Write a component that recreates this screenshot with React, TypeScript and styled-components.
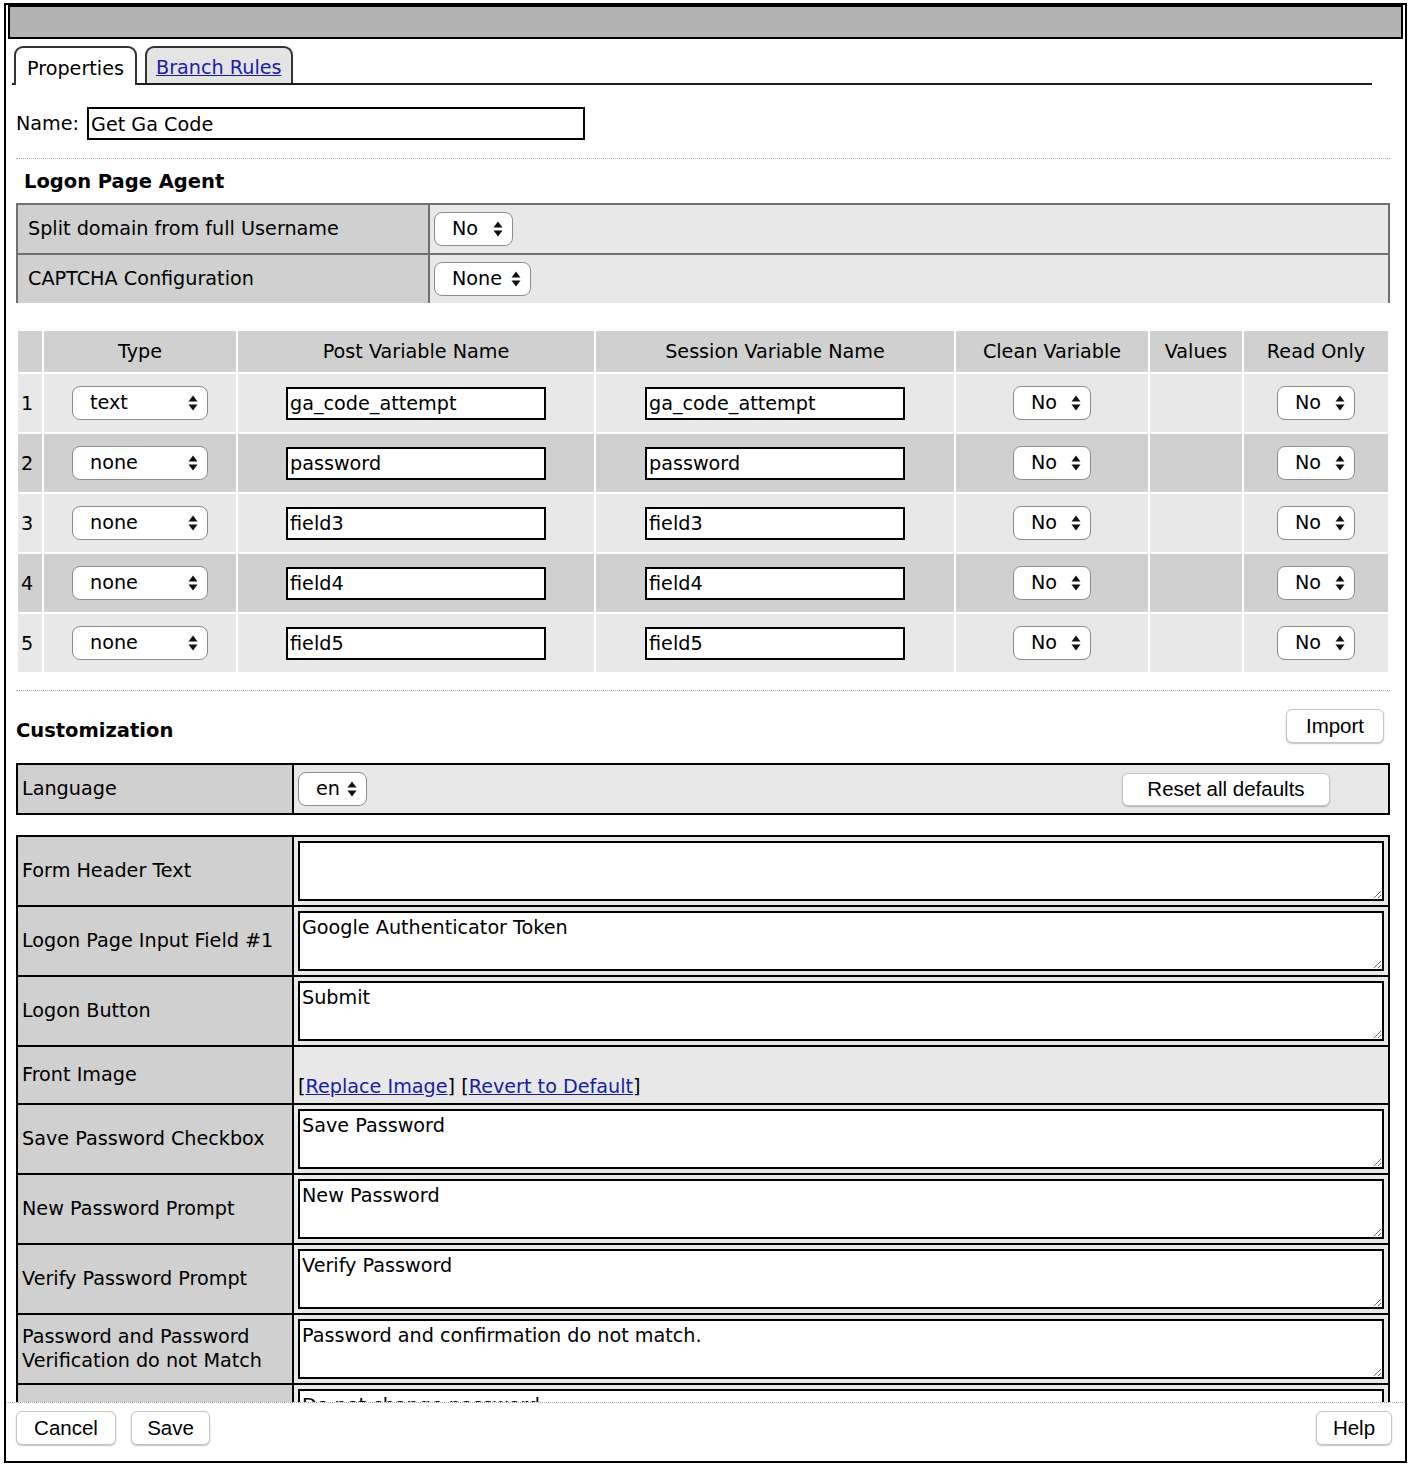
import React from 'react';
import styled, { createGlobalStyle } from 'styled-components';

const FONT = `"DejaVu Sans", Verdana, sans-serif`;
const BTN_FONT = `"Liberation Sans", Arial, Helvetica, sans-serif`;

const Global = createGlobalStyle`
  html, body { margin: 0; padding: 0; background: #fff; }
  body { font-family: ${FONT}; font-size: 19.2px; line-height: 24px; color: #000; }
  * { box-sizing: border-box; }
`;

const Frame = styled.div`
  margin: 3px 0 0 4px;
  width: 1403px;
  height: 1460px;
  border: 2px solid #000;
  display: flex;
  flex-direction: column;
  background: #fff;
`;

const TitleBar = styled.div`
  flex: none;
  height: 34px;
  margin: 0 2px;
  background: #b3b3b3;
  border: 2px solid #000;
`;

const Body = styled.div`
  flex: 1;
  min-height: 0;
  overflow: hidden;
  padding: 0 15px 0 10px;
`;

const TabBar = styled.div`
  display: flex;
  align-items: flex-end;
  gap: 8px;
  height: 39px;
  margin: 7px 18px 0 -4px;
  padding-left: 2px;
  border-bottom: 2px solid #1c1c1c;
`;

const Tab = styled.div<{ $active?: boolean }>`
  display: flex;
  align-items: center;
  height: ${(p) => (p.$active ? 39 : 37)}px;
  margin-bottom: ${(p) => (p.$active ? -2 : 0)}px;
  padding: 4px ${(p) => (p.$active ? 11 : 9)}px 0;
  border: 2px solid #333;
  border-bottom: none;
  border-radius: 9px 9px 0 0;
  background: ${(p) => (p.$active ? '#fff' : '#e4e4e4')};
`;

const Link = styled.a`
  color: #1b1ba6;
  text-decoration: underline;
  cursor: pointer;
`;

const NameRow = styled.div`
  display: flex;
  align-items: center;
  gap: 8px;
  margin-top: 22px;
`;

const TextInput = styled.input<{ $w: number }>`
  width: ${(p) => p.$w}px;
  height: 33px;
  border: 2px solid #000;
  padding: 1px 2px 0;
  font: inherit;
  color: #000;
  background: #fff;
  outline: none;
`;

const Separator = styled.div<{ $top: number }>`
  margin-top: ${(p) => p.$top}px;
  border-top: 1px dotted #a6a6a6;
`;

const SectionTitle = styled.div<{ $indent?: number }>`
  font-weight: bold;
  font-size: 19.5px;
  line-height: 24px;
  padding-left: ${(p) => p.$indent ?? 0}px;
`;

const AgentTitle = styled(SectionTitle)`
  margin-top: 11px;
`;

const AgentGrid = styled.div`
  display: grid;
  grid-template-columns: 410px 1fr;
  grid-auto-rows: 48px;
  gap: 2px;
  padding: 2px 2px 0 2px;
  margin-top: 9px;
  background: #707070;
`;

const LabelCell = styled.div<{ $pad?: number }>`
  display: flex;
  align-items: center;
  padding: 0 2px 0 ${(p) => p.$pad ?? 4}px;
  background: #d0d0d0;
`;

const ValueCell = styled.div<{ $align?: string }>`
  display: flex;
  align-items: ${(p) => p.$align ?? 'center'};
  padding: 4px;
  background: #e8e8e8;
`;

const VarGrid = styled.div`
  display: grid;
  grid-template-columns: 24px 192px 356px 358px 192px 92px 144px;
  grid-template-rows: 41px;
  grid-auto-rows: 58px;
  gap: 2px;
  padding: 2px;
  margin-top: 26px;
  background: #fff;
`;

const HeadCell = styled.div`
  display: flex;
  align-items: center;
  justify-content: center;
  background: #d0d0d0;
  white-space: nowrap;
`;

const VarCell = styled.div<{ $even: boolean; $left?: boolean }>`
  display: flex;
  align-items: center;
  justify-content: ${(p) => (p.$left ? 'flex-start' : 'center')};
  padding-left: ${(p) => (p.$left ? 3 : 0)}px;
  padding-top: ${(p) => (p.$left ? 2 : 0)}px;
  background: ${(p) => (p.$even ? '#d0d0d0' : '#e8e8e8')};
`;

const SelectBox = styled.div<{ $w: number }>`
  display: inline-flex;
  align-items: center;
  justify-content: space-between;
  width: ${(p) => p.$w}px;
  height: 34px;
  padding: 0 9px 0 17px;
  background: #fff;
  border: 1px solid #8c8c8c;
  border-radius: 8px;
  flex: none;
`;

const CustomHeader = styled.div`
  display: flex;
  align-items: flex-end;
  justify-content: space-between;
  margin-top: 18px;
  padding-right: 6px;
`;

const Button = styled.button<{ $w: number; $h?: number }>`
  width: ${(p) => p.$w}px;
  height: ${(p) => p.$h ?? 34}px;
  padding: 0;
  font-family: ${BTN_FONT};
  font-size: 20.5px;
  color: #000;
  background: #fff;
  border: 1px solid #c4c4c4;
  border-radius: 6px;
  box-shadow: 0 1px 1.5px rgba(0, 0, 0, 0.25);
  flex: none;
`;

const BlackGrid = styled.div<{ $top: number }>`
  display: grid;
  grid-template-columns: 274px 1fr;
  gap: 2px;
  padding: 2px;
  margin-top: ${(p) => p.$top}px;
  background: #000;
`;

const LangValue = styled.div`
  display: flex;
  align-items: center;
  justify-content: space-between;
  height: 48px;
  padding: 0 58px 0 4px;
  background: #e8e8e8;
`;

const TextArea = styled.textarea`
  display: block;
  width: 100%;
  height: 60px;
  margin: 0;
  border: 2px solid #000;
  padding: 3px 2px 1px;
  font: inherit;
  line-height: 24px;
  color: #000;
  background: #fff;
  outline: none;
  resize: both;
`;

const ImageLinks = styled.div`
  height: 48px;
  display: flex;
  align-items: flex-end;
`;

const Footer = styled.div`
  flex: none;
  display: flex;
  align-items: flex-start;
  gap: 15px;
  height: 59px;
  padding: 8px 13px 0 10px;
  border-top: 1px dotted #a6a6a6;
`;

const FooterRight = styled.div`
  margin-left: auto;
`;

const Arrows = () => (
  <svg width="10" height="18" viewBox="0 0 10 18" aria-hidden="true">
    <path d="M5 1.5 L9.5 7.5 L0.5 7.5 Z M5 16.5 L9.5 10.5 L0.5 10.5 Z" fill="#111" />
  </svg>
);

const Select = ({ value, w }: { value: string; w: number }) => (
  <SelectBox $w={w}>
    <span>{value}</span>
    <Arrows />
  </SelectBox>
);

const vars = [
  { type: 'text', name: 'ga_code_attempt' },
  { type: 'none', name: 'password' },
  { type: 'none', name: 'field3' },
  { type: 'none', name: 'field4' },
  { type: 'none', name: 'field5' },
];

const custom: { key: string; label: string; value?: string; image?: boolean }[] = [
  { key: 'header', label: 'Form Header Text', value: '' },
  { key: 'field1', label: 'Logon Page Input Field #1', value: 'Google Authenticator Token' },
  { key: 'button', label: 'Logon Button', value: 'Submit' },
  { key: 'image', label: 'Front Image', image: true },
  { key: 'save', label: 'Save Password Checkbox', value: 'Save Password' },
  { key: 'new', label: 'New Password Prompt', value: 'New Password' },
  { key: 'verify', label: 'Verify Password Prompt', value: 'Verify Password' },
  { key: 'match', label: 'Password and Password Verification do not Match', value: 'Password and confirmation do not match.' },
  { key: 'keep', label: '', value: 'Do not change password' },
];

export default function App() {
  return (
    <>
      <Global />
      <Frame>
        <TitleBar />
        <Body>
          <TabBar>
            <Tab $active>Properties</Tab>
            <Tab>
              <Link>Branch Rules</Link>
            </Tab>
          </TabBar>

          <NameRow>
            <span>Name:</span>
            <TextInput $w={498} defaultValue="Get Ga Code" />
          </NameRow>

          <Separator $top={18} />
          <AgentTitle $indent={8}>Logon Page Agent</AgentTitle>
          <AgentGrid>
            <LabelCell $pad={10}>Split domain from full Username</LabelCell>
            <ValueCell>
              <Select value="No" w={79} />
            </ValueCell>
            <LabelCell $pad={10}>CAPTCHA Configuration</LabelCell>
            <ValueCell>
              <Select value="None" w={97} />
            </ValueCell>
          </AgentGrid>

          <VarGrid>
            <HeadCell />
            <HeadCell>Type</HeadCell>
            <HeadCell>Post Variable Name</HeadCell>
            <HeadCell>Session Variable Name</HeadCell>
            <HeadCell>Clean Variable</HeadCell>
            <HeadCell>Values</HeadCell>
            <HeadCell>Read Only</HeadCell>
            {vars.map((v, i) => {
              const even = i % 2 === 1;
              return (
                <React.Fragment key={i}>
                  <VarCell $even={even} $left>
                    {i + 1}
                  </VarCell>
                  <VarCell $even={even}>
                    <Select value={v.type} w={136} />
                  </VarCell>
                  <VarCell $even={even}>
                    <TextInput $w={260} defaultValue={v.name} />
                  </VarCell>
                  <VarCell $even={even}>
                    <TextInput $w={260} defaultValue={v.name} />
                  </VarCell>
                  <VarCell $even={even}>
                    <Select value="No" w={78} />
                  </VarCell>
                  <VarCell $even={even} />
                  <VarCell $even={even}>
                    <Select value="No" w={78} />
                  </VarCell>
                </React.Fragment>
              );
            })}
          </VarGrid>

          <Separator $top={16} />
          <CustomHeader>
            <SectionTitle>Customization</SectionTitle>
            <Button $w={98}>Import</Button>
          </CustomHeader>

          <BlackGrid $top={20}>
            <LabelCell>Language</LabelCell>
            <LangValue>
              <Select value="en" w={69} />
              <Button $w={208} $h={33}>
                Reset all defaults
              </Button>
            </LangValue>
          </BlackGrid>

          <BlackGrid $top={20}>
            {custom.map((c) => (
              <React.Fragment key={c.key}>
                <LabelCell>{c.label}</LabelCell>
                <ValueCell $align={c.image ? 'flex-end' : 'flex-start'}>
                  {c.image ? (
                    <ImageLinks>
                      <span>
                        [<Link>Replace Image</Link>] [<Link>Revert to Default</Link>]
                      </span>
                    </ImageLinks>
                  ) : (
                    <TextArea readOnly defaultValue={c.value} />
                  )}
                </ValueCell>
              </React.Fragment>
            ))}
          </BlackGrid>
        </Body>
        <Footer>
          <Button $w={100}>Cancel</Button>
          <Button $w={79}>Save</Button>
          <FooterRight>
            <Button $w={76}>Help</Button>
          </FooterRight>
        </Footer>
      </Frame>
    </>
  );
}
